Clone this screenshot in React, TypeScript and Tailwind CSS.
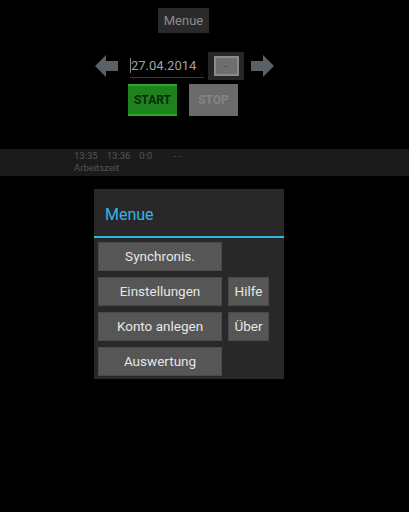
import React from "react";

function Arrow({ dir }: { dir: "left" | "right" }) {
  return (
    <svg width="24" height="24" viewBox="0 0 24 24" className={dir === "right" ? "scale-x-[-1]" : ""}>
      <polygon points="0,12 11,1 11,7 23,7 23,17 11,17 11,23" fill="#5b6064" />
    </svg>
  );
}

function DialogButton({ label, wide }: { label: string; wide?: boolean }) {
  return (
    <button
      className={`${wide ? "w-[124px]" : "w-[41px]"} h-[29px] bg-[#565656] border border-[#4a4a4a] text-[13.5px] text-[#e6e6e6] flex items-center justify-center`}
    >
      {label}
    </button>
  );
}

export default function App() {
  return (
    <div className="relative w-[409px] h-[512px] bg-black overflow-hidden font-['Roboto',sans-serif]">
      {/* Top: Menue button */}
      <div className="pt-[8px] pl-[158px]">
        <div className="w-[51px] h-[25px] bg-[#2a2a2a] text-[#8c8c8c] text-[13px] flex items-center justify-center">
          Menue
        </div>
      </div>

      {/* Date row */}
      <div className="flex items-center mt-[19px] h-[28px]">
        <div className="ml-[95px]">
          <Arrow dir="left" />
        </div>
        <div className="ml-[11px] w-[74px] h-[24px] border-b border-[#3a3a3a] flex items-center relative">
          <span className="w-px h-[15px] bg-[#8a8a8a]" />
          <span className="text-[#a0a0a0] text-[13px]">27.04.2014</span>
        </div>
        <div className="ml-[4px] w-[36px] h-[28px] bg-[#262626] flex items-center justify-center">
          <div className="w-[25px] h-[20px] bg-[#6e6e6e] border-2 border-[#8a8a8a] flex items-center justify-center">
            <span className="w-[4px] h-px bg-[#555]" />
          </div>
        </div>
        <div className="ml-[6px]">
          <Arrow dir="right" />
        </div>
      </div>

      {/* Start / Stop */}
      <div className="flex mt-[4px] h-[32px]">
        <div className="ml-[128px] w-[49px] h-[32px] bg-[#1d821d] border-y-2 border-[#2aa62a] flex items-center justify-center text-[12px] font-bold text-[#0a2c0a]">
          START
        </div>
        <div className="ml-[12px] w-[49px] h-[32px] bg-[#6b6b6b] flex items-center justify-center text-[12px] font-bold text-[#858585]">
          STOP
        </div>
      </div>

      {/* Status bar */}
      <div className="mt-[33px] h-[27px] bg-[#1b1b1b] pl-[74px] pt-[1px] text-[9.5px] leading-[12px] text-[#555]">
        <div className="flex gap-[9px]">
          <span>13:35</span>
          <span>13:36</span>
          <span>0:0</span>
          <span className="ml-[12px]">- -</span>
        </div>
        <div>Arbeitszeit</div>
      </div>

      {/* Dialog */}
      <div className="absolute left-[94px] top-[189px] w-[190px] h-[190px] bg-[#282828] shadow-[0_0_4px_rgba(0,0,0,0.8)]">
        <div className="h-[47px] flex items-center pl-[11px] pt-[4px] text-[16px] text-[#33b5e5]">Menue</div>
        <div className="h-[2px] bg-[#33b5e5]" />
        <div className="pl-[4px] pt-[4px] flex flex-col gap-[6px]">
          <div className="flex gap-[6px]">
            <DialogButton label="Synchronis." wide />
          </div>
          <div className="flex gap-[6px]">
            <DialogButton label="Einstellungen" wide />
            <DialogButton label="Hilfe" />
          </div>
          <div className="flex gap-[6px]">
            <DialogButton label="Konto anlegen" wide />
            <DialogButton label="Über" />
          </div>
          <div className="flex gap-[6px]">
            <DialogButton label="Auswertung" wide />
          </div>
        </div>
      </div>
    </div>
  );
}
